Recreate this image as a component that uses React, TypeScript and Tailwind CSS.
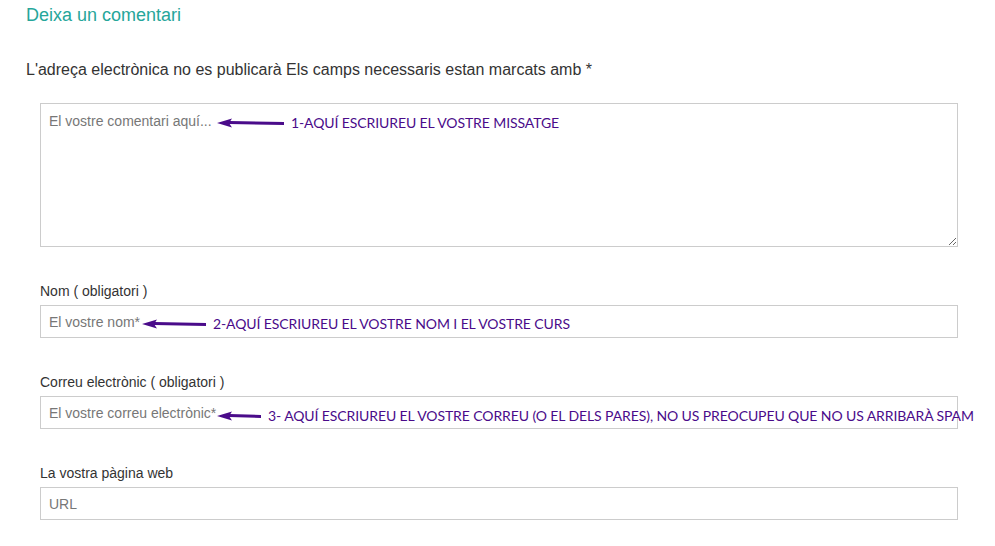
import React from 'react';

const Arrow = ({ width }: { width: number }) => (
  <svg width={width} height="10" viewBox={`0 0 ${width} 10`} className="block">
    <path d={`M${width} 5.5 L12 4.5`} stroke="#4a0b8a" strokeWidth="3" strokeLinecap="round" />
    <path d="M0 5 L15 0.5 L12 5 L15 9.5 Z" fill="#4a0b8a" />
  </svg>
);

const Note = ({
  text,
  arrow,
  className,
}: {
  text: string;
  arrow: number;
  className: string;
}) => (
  <div className={`absolute flex items-center gap-[7px] pointer-events-none ${className}`}>
    <Arrow width={arrow} />
    <span className="text-[14px] leading-none text-[#4a0b8a] whitespace-nowrap font-['Lato',sans-serif] tracking-[-0.1px]">
      {text}
    </span>
  </div>
);

export default function App() {
  return (
    <div className="w-[995px] h-[546px] bg-white overflow-hidden font-['Liberation_Sans',Arial,sans-serif]">
      <div className="px-[26px] pt-[3px]">
        <h3 className="text-[18px] leading-[24px] text-[#26a69a]">Deixa un comentari</h3>
        <p className="mt-[32px] text-[16px] leading-[22px] text-[#333]">
          L'adreça electrònica no es publicarà Els camps necessaris estan marcats amb *
        </p>

        <div className="ml-[14px] w-[918px] mt-[22px] flex flex-col">
          <div className="relative">
            <textarea
              placeholder="El vostre comentari aquí..."
              className="block w-full h-[144px] border border-[#ccc] px-[8px] py-[8px] text-[14px] leading-[18px] text-[#555] placeholder:text-[#777] outline-none resize-y"
            />
            <Note
              text="1-AQUÍ ESCRIUREU EL VOSTRE MISSATGE"
              arrow={67}
              className="left-[177px] top-[13px]"
            />
          </div>

          <label className="mt-[35px] text-[14px] leading-[18px] text-[#333]">Nom ( obligatori )</label>
          <div className="relative mt-[5px]">
            <input
              placeholder="El vostre nom*"
              className="block w-full h-[33px] border border-[#ccc] px-[8px] text-[14px] text-[#555] placeholder:text-[#777] outline-none"
            />
            <Note
              text="2-AQUÍ ESCRIUREU EL VOSTRE NOM I EL VOSTRE CURS"
              arrow={64}
              className="left-[102px] top-[12px]"
            />
          </div>

          <label className="mt-[35px] text-[14px] leading-[18px] text-[#333]">
            Correu electrònic ( obligatori )
          </label>
          <div className="relative mt-[5px]">
            <input
              placeholder="El vostre correu electrònic*"
              className="block w-full h-[33px] border border-[#ccc] px-[8px] text-[14px] text-[#555] placeholder:text-[#777] outline-none"
            />
            <Note
              text="3- AQUÍ ESCRIUREU EL VOSTRE CORREU (O EL DELS PARES), NO US PREOCUPEU QUE NO US ARRIBARÀ SPAM"
              arrow={44}
              className="left-[177px] top-[13px]"
            />
          </div>

          <label className="mt-[35px] text-[14px] leading-[18px] text-[#333]">La vostra pàgina web</label>
          <div className="relative mt-[5px]">
            <input
              placeholder="URL"
              className="block w-full h-[33px] border border-[#ccc] px-[8px] text-[14px] text-[#555] placeholder:text-[#777] outline-none"
            />
          </div>
        </div>
      </div>
    </div>
  );
}
